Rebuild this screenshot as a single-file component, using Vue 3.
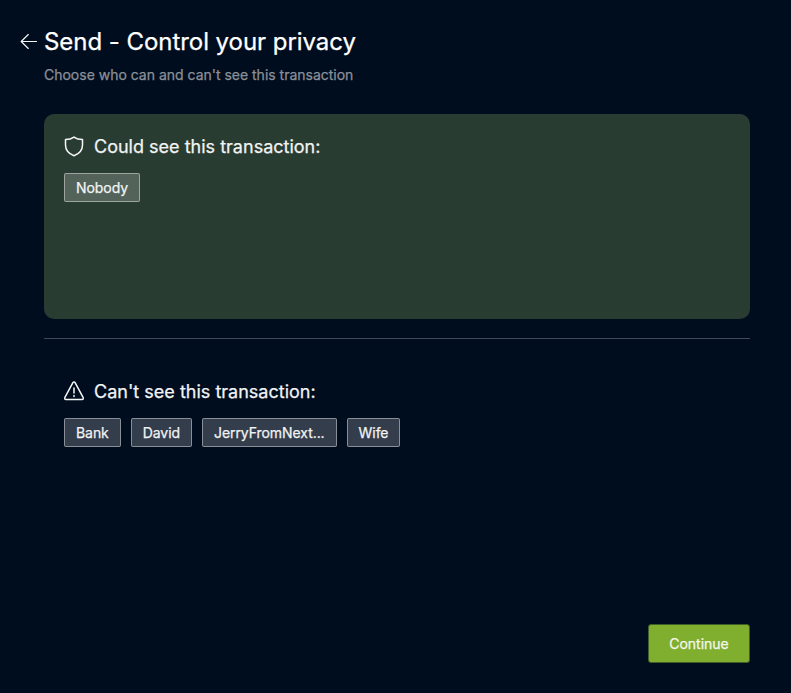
<script setup>
const canSee = ['Nobody']
const cannotSee = ['Bank', 'David', 'JerryFromNext...', 'Wife']
</script>

<template>
  <main class="page">
    <header class="header">
      <button class="back" aria-label="Back">
        <svg width="18" height="18" viewBox="0 0 18 18"><path d="M16.500 8.500H1.200M8.300 1.500L1.200 8.500l7.100 7" /></svg>
      </button>
      <div>
        <h1>Send - Control your privacy</h1>
        <p>Choose who can and can't see this transaction</p>
      </div>
    </header>

    <section class="panel visible">
      <h2>
        <svg width="20" height="22" viewBox="0 0 20 22"><path d="M10 1.100C7.500 3 4.600 3.600 1.500 3.600V9C1.500 14.200 4.600 17.700 10 19.700C15.400 17.700 18.500 14.200 18.500 9V3.600C15.400 3.600 12.500 3 10 1.100Z" /></svg>
        <span>Could see this transaction:</span>
      </h2>
      <div class="tags"><span v-for="name in canSee" :key="name" class="tag">{{ name }}</span></div>
    </section>

    <hr />

    <section class="panel">
      <h2>
        <svg width="20" height="22" viewBox="0 0 20 22"><path d="M8.900 1.700a1.250 1.250 0 0 1 2.200 0L19.200 16.600a1.250 1.250 0 0 1-1.100 1.900H1.900A1.250 1.250 0 0 1 .8 16.600ZM10 7v5M10 14.400v1" /></svg>
        <span>Can't see this transaction:</span>
      </h2>
      <div class="tags"><span v-for="name in cannotSee" :key="name" class="tag">{{ name }}</span></div>
    </section>

    <footer><button class="continue">Continue</button></footer>
  </main>
</template>

<style>
body {
  background: #000d1e;
}
</style>

<style scoped>
.page {
  box-sizing: border-box;
  height: 693px;
  padding: 26px 41px 30px 20px;
  display: flex;
  flex-direction: column;
  background: #000d1e;
  color: #f2f3f4;
  font-family: Inter, "Liberation Sans", sans-serif;
  -webkit-text-stroke: 0.25px currentColor;
}
.header {
  display: flex;
  height: 88px;
  flex: none;
}
.back {
  width: 24px;
  height: 32px;
  padding: 0;
  border: 0;
  background: none;
  display: flex;
  align-items: center;
}
svg {
  flex: none;
  fill: none;
  stroke: #f5f6f6;
  stroke-width: 1.5;
  stroke-linecap: round;
  stroke-linejoin: round;
}
.back svg {
  stroke-width: 1.15;
}
h1 {
  margin: 0;
  font-size: 24px;
  line-height: 32px;
  font-weight: 400;
  letter-spacing: -0.05px;
  color: #fff;
}
p {
  margin: 7px 0 0;
  font-size: 14px;
  line-height: 20px;
  letter-spacing: -0.01px;
  color: #8a9098;
}
.panel {
  box-sizing: border-box;
  height: 205px;
  margin-left: 24px;
  padding: 20px;
  border-radius: 10px;
  flex: none;
}
.visible {
  background: #293c31;
}
hr {
  flex: none;
  height: 1px;
  margin: 19px 0 20px 24px;
  border: 0;
  background: #404a56;
}
h2 {
  margin: 0 0 14px;
  height: 25px;
  display: flex;
  align-items: center;
  gap: 10px;
  font-size: 18px;
  line-height: 25px;
  font-weight: 400;
  letter-spacing: 0.01px;
}
.tags {
  display: flex;
  gap: 10px;
}
.tag {
  box-sizing: border-box;
  height: 29px;
  padding: 0 11px;
  border: 1px solid rgba(255, 255, 255, 0.54);
  border-radius: 2px;
  background: rgba(255, 255, 255, 0.2);
  background-clip: padding-box;
  font-size: 14px;
  line-height: 27px;
  letter-spacing: -0.065px;
}
footer {
  margin-top: auto;
  display: flex;
  justify-content: flex-end;
}
.continue {
  width: 102px;
  height: 39px;
  padding: 0;
  border: 1px solid #405e27;
  border-radius: 3px;
  background: #80af30;
  color: #f4f7ed;
  font-family: inherit;
  font-size: 14px;
  -webkit-text-stroke: 0.25px currentColor;
}
</style>
